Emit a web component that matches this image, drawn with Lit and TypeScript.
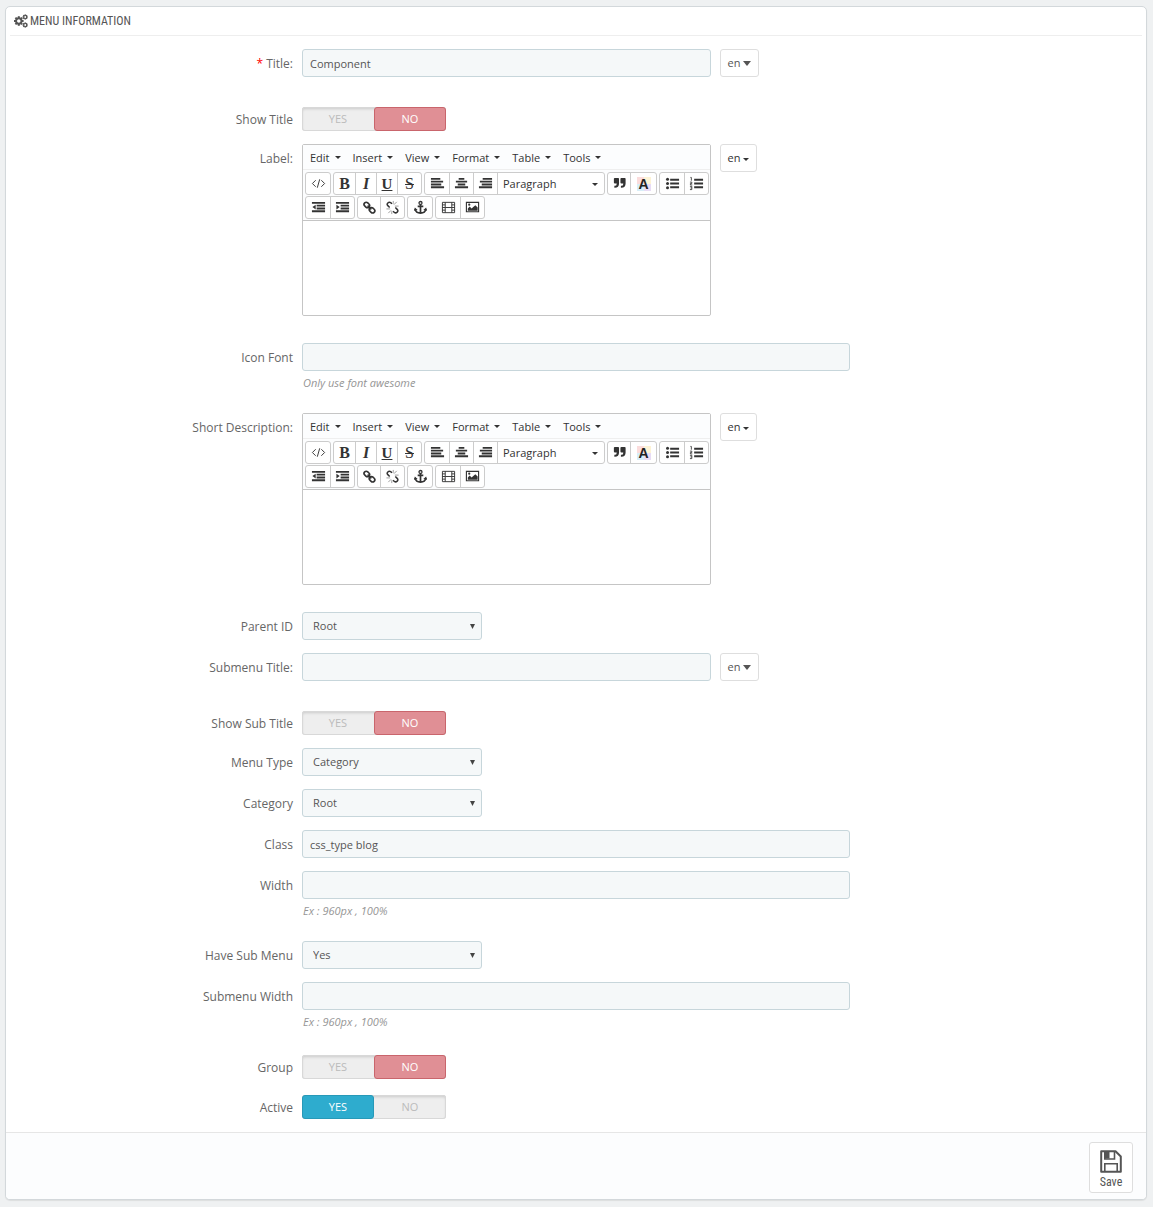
import { LitElement, html, css, svg, nothing, TemplateResult } from "lit";
import { customElement, property } from "lit/decorators.js";
import { classMap } from "lit/directives/class-map.js";

const FONT = css`"Open Sans", "Liberation Sans", sans-serif`;
const CONDENSED = css`"Ubuntu Condensed", "Roboto Condensed", "Liberation Sans Narrow", "Open Sans", sans-serif`;

const icon = (body: TemplateResult, w = 16, h = 16) =>
  html`<svg class="icon" width=${w} height=${h} viewBox="0 0 ${w} ${h}" aria-hidden="true">${body}</svg>`;

const ICONS = {
  code: icon(svg`<path d="M5 4.500L1.500 8L5 11.500M11 4.500L14.500 8L11 11.500M9.300 3.500L6.700 12.500" fill="none" stroke="currentColor" stroke-width="1"/>`),
  left: icon(svg`<path d="M1 2h10v2H1zM1 5h13v2H1zM1 8h11v2H1zM1 11h14v2H1z" fill="currentColor"/>`),
  center: icon(svg`<path d="M5 2h6v2H5zM2 5h12v2H2zM4 8h8v2H4zM1 11h14v2H1z" fill="currentColor"/>`),
  right: icon(svg`<path d="M5 2h10v2H5zM2 5h13v2H2zM4 8h11v2H4zM1 11h14v2H1z" fill="currentColor"/>`),
  quote: icon(svg`<path d="M3 2h3.500q1 0 1 1v5q0 4.500-4.500 4.500h-.5v-2H3q2 0 2-2V8H3q-1 0-1-1V3q0-1 1-1zM10 2h3.500q1 0 1 1v5q0 4.500-4.500 4.500h-.5v-2h.5q2 0 2-2V8h-2q-1 0-1-1V3q0-1 1-1z" fill="currentColor"/>`),
  bullets: icon(svg`<g fill="currentColor"><circle cx="2.700" cy="3.500" r="1.600"/><circle cx="2.700" cy="8" r="1.600"/><circle cx="2.700" cy="12.500" r="1.600"/><path d="M5.500 3h9.500v2H5.500zM5.500 7h9.500v2H5.500zM5.500 11h9.500v2H5.500z"/></g>`),
  numbers: icon(svg`<path d="M5.500 3h9.500v2H5.500zM5.500 7h9.500v2H5.500zM5.500 11h9.500v2H5.500z" fill="currentColor"/><path d="M1.500 1.500h1V5M1 6.500h2V8H1.500V9.500H3.500M1 11h2v3.500H1M1.500 12.700H3" fill="none" stroke="currentColor" stroke-width=".9"/>`),
  outdent: icon(svg`<path d="M1 2h14v2H1zM6 5h9v2H6zM6 8h9v2H6zM1 11h14v2H1zM5 5v5L1.500 7.500z" fill="currentColor"/>`),
  indent: icon(svg`<path d="M1 2h14v2H1zM6 5h9v2H6zM6 8h9v2H6zM1 11h14v2H1zM1.500 5v5L5 7.500z" fill="currentColor"/>`),
  link: icon(svg`<g fill="none" stroke="currentColor" stroke-width="1.700"><rect x="-3.200" y="-2.200" width="6.400" height="4.600" rx="2.300" transform="translate(5.200 5.200) rotate(45)"/><rect x="-3.200" y="-2.200" width="6.400" height="4.600" rx="2.300" transform="translate(10.800 10.800) rotate(45)"/><path d="M6 6l4 4"/></g>`),
  unlink: icon(svg`<g fill="none" stroke="currentColor" stroke-width="1.600"><path d="M7.500 4L6 2.800Q4.500 1.800 3 3.200T3 6L5 8M8.500 12l1.500 1.300q1.500 1 3-.4t0-2.900l-2-2"/><path d="M9.500 5l3-3M10.500 6.500h4M8.800 4V1M6.500 11l-3 3M5.500 9.500h-4M7.200 12v3" stroke-width=".5"/></g>`),
  anchor: icon(svg`<g fill="none" stroke="currentColor"><circle cx="8" cy="3.200" r="1.600" stroke-width="1.400"/><path d="M8 5v9M5 6.800h6M2.200 9.500Q3 14 8 14t5.800-4.500" stroke-width="1.800"/></g><path d="M1 11.500L2 8l3 2.700zM15 11.500L14 8l-3 2.700z" fill="currentColor"/>`),
  film: icon(svg`<g fill="none" stroke="currentColor"><path d="M1.500 2.500h13v11h-13zM4.500 2.500v11M11.500 2.500v11M4.500 8h7"/><path d="M1.500 5.200h3M1.500 8h3M1.500 10.800h3M11.500 5.200h3M11.500 8h3M11.500 10.800h3"/></g>`),
  image: icon(svg`<path d="M1.500 2.500h13v10h-13z" fill="none" stroke="currentColor" stroke-width="1.200"/><path d="M3 11.500V9l2-2 2 2 4-3.500 2.500 2.500v3.500z" fill="currentColor"/><circle cx="4.500" cy="5" r="1.200" fill="currentColor"/>`),
};

const caret = html`<svg class="caret" width="6" height="3" viewBox="0 0 6 3" aria-hidden="true"><path d="M0 0h6L3 3z" fill="currentColor" /></svg>`;

@customElement("rich-editor")
class RichEditor extends LitElement {
  @property() label = "";

  static styles = css`
    :host { display: block; font: 11px/16px ${FONT}; color: #333; }
    .editor { border: 1px solid #c5c5c5; border-radius: 2px; background: #fff; }
    .menubar { display: flex; height: 24px; padding-left: 1px; background: #fcfdfe; border-bottom: 1px solid #efefef; }
    button { font: inherit; color: inherit; background: none; border: 0; margin: 0; padding: 0; display: flex; align-items: center; justify-content: center; }
    .menubar button { padding: 1px 6px 0; gap: 5px; }
    .toolbar { display: flex; flex-wrap: wrap; gap: 1px 2px; padding: 2px 0 1px 2px; background: #fcfdfe; border-bottom: 1px solid #c5c5c5; }
    .group { display: flex; box-sizing: border-box; height: 23px; border: 1px solid #ccc; border-radius: 3px; background: #fff; }
    .group button { box-sizing: border-box; width: 24px; }
    .icon { flex: none; width: 15px; height: 15px; }
    .group button + button { border-left: 1px solid #ccc; }
    .group .w21 { width: 21px; }
    .group .w22 { width: 22px; }
    .group .w26 { width: 26px; }
    .group .format { width: 107px; padding: 1px 6px 0 5px; justify-content: space-between; }
    .glyph { font: bold 16px/20px "Liberation Serif", serif; }
    .italic { font-style: italic; }
    .under { font-size: 15px; text-decoration: underline; }
    .strike { font-weight: normal; text-decoration: line-through; }
    .mark { font: bold 14px/14px "Liberation Sans", sans-serif; color: #222; width: 14px; background: conic-gradient(#fdf3d5 25%, #e8dcf5 0 50%, #d7eef8 0 75%, #fbdcdc 0); }
    .area { display: block; box-sizing: border-box; width: 100%; height: 94px; border: 0; padding: 8px; resize: none; outline: none; font: inherit; background: #fff; border-radius: 2px; }
  `;

  private tool(name: string, body: unknown, cls = "") {
    return html`<button type="button" class=${cls} aria-label=${name}>${body}</button>`;
  }

  render() {
    return html`
      <div class="editor">
        <div class="menubar">
          ${["Edit", "Insert", "View", "Format", "Table", "Tools"].map((m) => html`<button type="button">${m}${caret}</button>`)}
        </div>
        <div class="toolbar">
          <div class="group">${this.tool("Source code", ICONS.code)}</div>
          <div class="group">
            ${this.tool("Bold", html`<span class="glyph">B</span>`, "w21")}
            ${this.tool("Italic", html`<span class="glyph italic">I</span>`, "w21")}
            ${this.tool("Underline", html`<span class="glyph under">U</span>`, "w21")}
            ${this.tool("Strikethrough", html`<span class="glyph strike">S</span>`)}
          </div>
          <div class="group">
            ${this.tool("Align left", ICONS.left)}${this.tool("Align center", ICONS.center)}${this.tool("Align right", ICONS.right)}
            <button type="button" class="format">Paragraph${caret}</button>
          </div>
          <div class="group">
            ${this.tool("Blockquote", ICONS.quote, "w22")}${this.tool("Text color", html`<span class="mark">A</span>`, "w26")}
          </div>
          <div class="group">${this.tool("Bullet list", ICONS.bullets)}${this.tool("Numbered list", ICONS.numbers)}</div>
          <div class="group">${this.tool("Decrease indent", ICONS.outdent)}${this.tool("Increase indent", ICONS.indent)}</div>
          <div class="group">${this.tool("Insert link", ICONS.link, "w22")}${this.tool("Remove link", ICONS.unlink)}</div>
          <div class="group">${this.tool("Anchor", ICONS.anchor)}</div>
          <div class="group">${this.tool("Insert video", ICONS.film)}${this.tool("Insert image", ICONS.image)}</div>
        </div>
        <textarea class="area" aria-label=${this.label}></textarea>
      </div>
    `;
  }
}

type Field = {
  kind: "lang" | "editor" | "text" | "select" | "toggle";
  label: string;
  value?: string;
  help?: string;
  required?: boolean;
};

const FIELDS: Field[] = [
  { kind: "lang", label: "Title:", value: "Component", required: true },
  { kind: "toggle", label: "Show Title", value: "NO" },
  { kind: "editor", label: "Label:" },
  { kind: "text", label: "Icon Font", help: "Only use font awesome" },
  { kind: "editor", label: "Short Description:" },
  { kind: "select", label: "Parent ID", value: "Root" },
  { kind: "lang", label: "Submenu Title:" },
  { kind: "toggle", label: "Show Sub Title", value: "NO" },
  { kind: "select", label: "Menu Type", value: "Category" },
  { kind: "select", label: "Category", value: "Root" },
  { kind: "text", label: "Class", value: "css_type blog" },
  { kind: "text", label: "Width", help: "Ex : 960px , 100%" },
  { kind: "select", label: "Have Sub Menu", value: "Yes" },
  { kind: "text", label: "Submenu Width", help: "Ex : 960px , 100%" },
  { kind: "toggle", label: "Group", value: "NO" },
  { kind: "toggle", label: "Active", value: "YES" },
];

// One gear outline: eight square teeth around a ring with a round hole.
const gear = (cx: number, cy: number, r: number, hole: number, tooth: number) => svg`
  <g transform="translate(${cx} ${cy})" fill="currentColor">
    ${[0, 45, 90, 135].map((a) => svg`<rect x=${-tooth / 2} y=${-r} width=${tooth} height=${(r - hole) * 0.9} transform="rotate(${a})"/><rect x=${-tooth / 2} y=${-r} width=${tooth} height=${(r - hole) * 0.9} transform="rotate(${a + 180})"/>`)}
    <circle r=${(r * 0.78 + hole) / 2} fill="none" stroke="currentColor" stroke-width=${r * 0.78 - hole}/>
  </g>`;

@customElement("app-root")
class AppRoot extends LitElement {
  static styles = css`
    :host { display: block; box-sizing: border-box; min-height: 100vh; padding: 6px 6px 7px 5px; background: #eff1f2; font: 12px/16px ${FONT}; color: #666; }
    .panel { background: #fff; border: 1px solid #d3d8db; border-radius: 5px; box-shadow: 0 1px 1px rgba(0, 0, 0, 0.08); overflow: hidden; }
    .heading { display: flex; align-items: center; gap: 2px; margin: 0 4px; padding: 0 4px; height: 28px; border-bottom: 1px solid #eee; font: 12px/28px ${CONDENSED}; color: #555; text-transform: uppercase; }
    .body { padding: 13px 12px 0; }
    .row { display: grid; grid-template-columns: 1fr 3fr; margin-bottom: 13px; }
    .row-lang, .row-editor { margin-bottom: 27px; }
    .row-toggle { padding-top: 3px; }
    .label { text-align: right; padding-right: 4px; line-height: 28px; padding-top: 1px; height: 26px; }
    .row-toggle .label { line-height: 24px; height: 22px; }
    .star { color: #f00; }
    .field { display: flex; flex-wrap: wrap; min-width: 0; }
    .half, .wide, .auto { box-sizing: border-box; padding: 0 5px; }
    .lang-slot { padding: 0 4px; }
    .half { width: 50%; }
    .wide { width: 66.666%; }
    .input, .select { box-sizing: border-box; display: block; height: 28px; font: 11px/16px ${FONT}; color: #555; background: #f5f8f9; border: 1px solid #c7d6db; border-radius: 3px; outline: none; margin: 0; }
    .input { width: 100%; padding: 0 7px; }
    .pick { position: relative; width: 180px; }
    .select { width: 100%; padding: 0 10px; appearance: none; }
    .arrow { position: absolute; right: 7px; top: 12px; pointer-events: none; color: #444; }
    .help { margin: 4px 0 0 1px; height: 25px; line-height: 16px; font-size: 11px; font-style: italic; color: #959595; }
    .lang-btn { box-sizing: border-box; height: 28px; display: flex; align-items: center; gap: 3px; padding: 0 7px; font: 11px/16px ${FONT}; color: #555; background: #fff; border: 1px solid #dedede; border-radius: 3px; margin: 0; }
    .row-editor .lang-btn { color: #333; gap: 3px; }
    .row-editor .lang-btn svg { margin-top: 3px; }
    .switch { display: grid; grid-template-columns: 1fr 1fr; width: 144px; height: 24px; background: #eee; border-radius: 3px; box-shadow: inset 0 0 0 1px #d8d8d8, inset 0 2px 3px rgba(0, 0, 0, 0.15); }
    .switch input { position: absolute; opacity: 0; pointer-events: none; }
    .option { box-sizing: border-box; border: 1px solid transparent; border-radius: 3px; text-align: center; font-size: 11px; line-height: 22px; color: #bbb; }
    .option.no { background: #e08f95; border-color: #c9656c; color: #fff; }
    .option.yes { background: #2eacce; border-color: #2799b8; color: #fff; }
    .footer { display: flex; justify-content: flex-end; padding: 9px 13px 6px; background: #fcfdfe; border-top: 1px solid #e6e6e6; }
    .save { box-sizing: border-box; display: flex; flex-direction: column; align-items: center; width: 44px; height: 51px; padding: 7px 0 0; gap: 1px; font: 12px/16px ${CONDENSED}; color: #555; background: #fff; border: 1px solid #dedede; border-radius: 3px; margin: 0; }
  `;

  private langButton(small: boolean) {
    return html`<button type="button" class="lang-btn">en${small ? caret : html`<svg width="8" height="5" viewBox="0 0 8 5" aria-hidden="true"><path d="M0 0h8L4 5z" fill="currentColor" /></svg>`}</button>`;
  }

  private control(f: Field, id: string) {
    const help = f.help ? html`<div class="help">${f.help}</div>` : nothing;
    switch (f.kind) {
      case "lang":
        return html`<div class="half"><input class="input" type="text" id=${id} .value=${f.value ?? ""} /></div>
          <div class="lang-slot">${this.langButton(false)}</div>`;
      case "editor":
        return html`<div class="half"><rich-editor id=${id} .label=${f.label}></rich-editor></div>
          <div class="lang-slot">${this.langButton(true)}</div>`;
      case "text":
        return html`<div class="wide"><input class="input" type="text" id=${id} .value=${f.value ?? ""} />${help}</div>`;
      case "select":
        return html`<div class="auto"><div class="pick">
          <select class="select" id=${id}><option>${f.value}</option></select>
          <svg class="arrow" width="5" height="5" viewBox="0 0 5 5" aria-hidden="true"><path d="M0 0h5L2.500 5z" fill="currentColor" /></svg>
        </div></div>`;
      case "toggle":
        return html`<div class="auto"><div class="switch" role="radiogroup" aria-label=${f.label}>
          ${["YES", "NO"].map((o) => html`<label class=${classMap({ option: true, [o.toLowerCase()]: o === f.value })}>
            <input type="radio" name=${id} ?checked=${o === f.value} />${o}</label>`)}
        </div></div>`;
    }
  }

  render() {
    return html`
      <form class="panel" @submit=${(e: Event) => e.preventDefault()}>
        <div class="heading">
          <svg width="14" height="14" viewBox="0 0 14 14" aria-hidden="true">
            ${gear(4.8, 7, 4.8, 1.8, 2)}${gear(11.2, 3, 2.7, 1, 1.2)}${gear(11.2, 11, 2.7, 1, 1.2)}
          </svg>
          <span>Menu information</span>
        </div>
        <div class="body">
          ${FIELDS.map((f, i) => {
            const id = `field-${i}`;
            const text = html`${f.required ? html`<span class="star">*</span> ` : nothing}${f.label}`;
            return html`<div class="row row-${f.kind}">
              ${f.kind === "toggle" || f.kind === "editor"
                ? html`<span class="label">${text}</span>`
                : html`<label class="label" for=${id}>${text}</label>`}
              <div class="field">${this.control(f, id)}</div>
            </div>`;
          })}
        </div>
        <div class="footer">
          <button type="submit" class="save">
            <svg width="22" height="23" viewBox="0 0 22 23" aria-hidden="true">
              <path d="M1.200 1.200h14.300l5.300 5.300v15.300H1.200z" fill="none" stroke="currentColor" stroke-width="2" stroke-linejoin="round" />
              <path d="M4.800 1v8h9.700V1M4.800 22v-8.200h12.400V22" fill="none" stroke="currentColor" stroke-width="1.600" />
              <path d="M4.500 1.500h5v7h-5z" fill="currentColor" />
            </svg>
            <span>Save</span>
          </button>
        </div>
      </form>
    `;
  }
}
